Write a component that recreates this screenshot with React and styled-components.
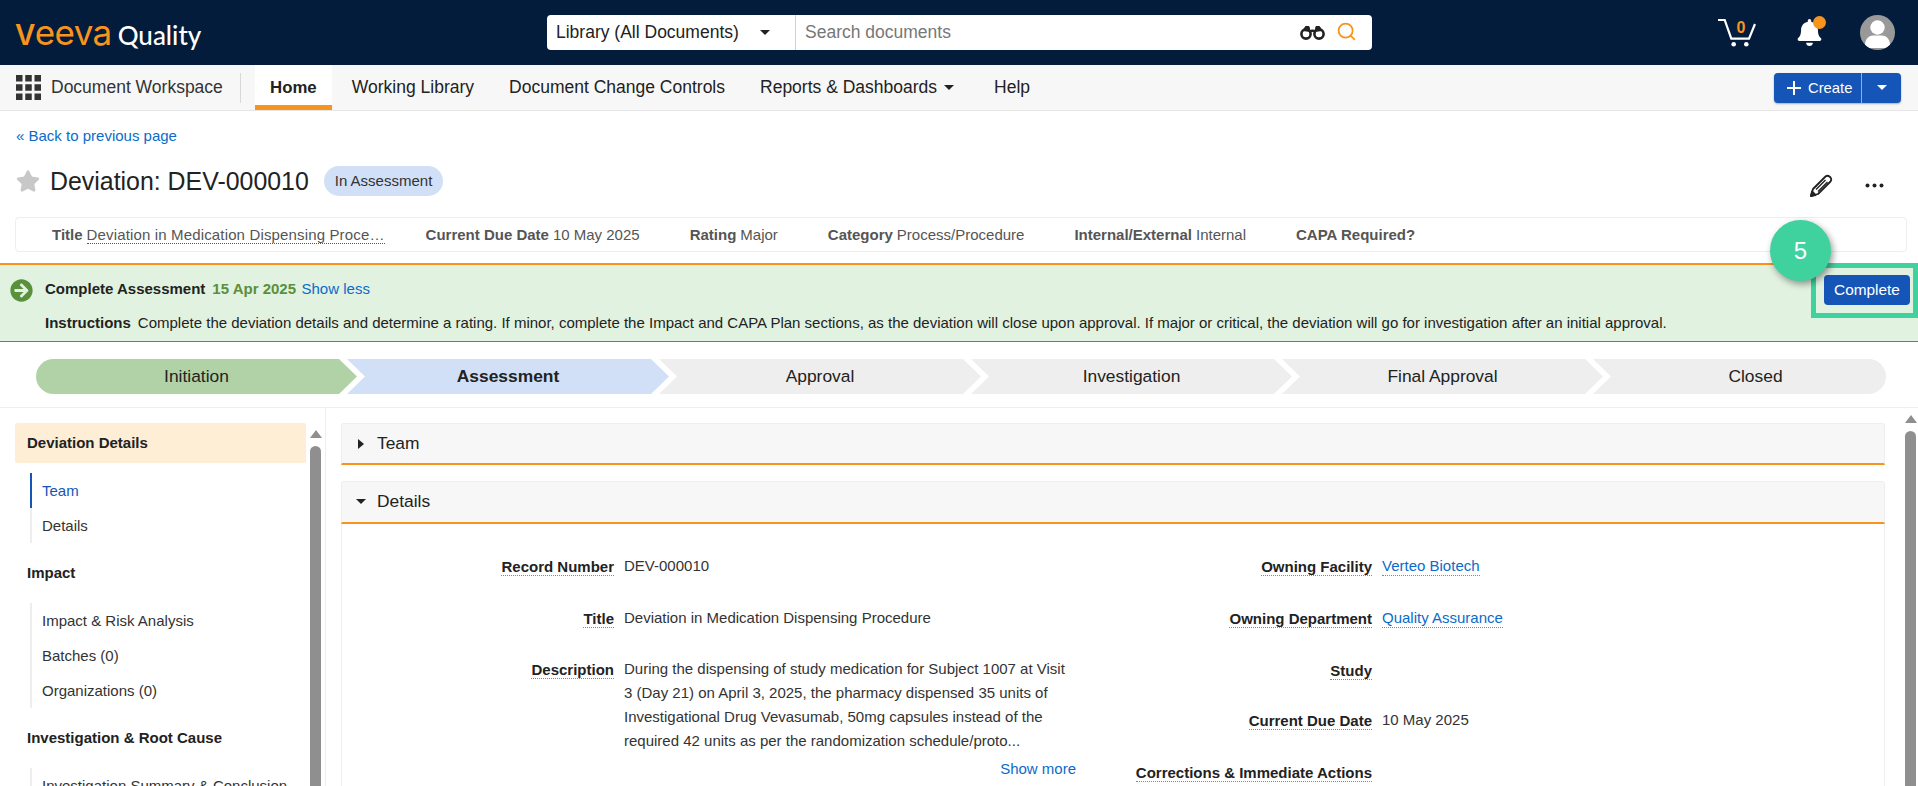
import React from 'react';
import styled, { createGlobalStyle } from 'styled-components';
import { Search } from 'lucide-react';
import { FaBell, FaStar, FaArrowCircleRight } from 'react-icons/fa';

const GlobalStyle = createGlobalStyle`
  * { box-sizing: border-box; }
  html, body { margin: 0; padding: 0; background: #fff; }
  body {
    font-family: "Liberation Sans", Arial, sans-serif;
    font-size: 15px;
    color: #222;
  }
`;

const Page = styled.div`
  height: 786px;
  display: flex;
  flex-direction: column;
  overflow: hidden;
`;

const TopBar = styled.header`
  height: 65px;
  flex: none;
  display: flex;
  align-items: center;
  padding: 0 23px 0 15px;
  background: #041c3c;
`;

const Logo = styled.div`
  width: 532px;
  display: flex;
  align-items: baseline;
  gap: 6px;
  padding-top: 1px;
`;

const Wordmark = styled.span`
  color: #f7941e;
  font-family: Inter, sans-serif;
  font-size: 35px;
  line-height: 40px;
  font-weight: 400;
  letter-spacing: -0.6px;
`;

const WordmarkCap = styled.span`
  font-size: 28px;
  font-weight: 600;
`;

const Product = styled.span`
  color: #fff;
  font-family: Lato, sans-serif;
  font-size: 26px;
  font-weight: 500;
`;

const SearchBar = styled.div`
  width: 825px;
  height: 35px;
  display: flex;
  align-items: center;
  background: #fff;
  border-radius: 4px;
`;

const ScopeSelect = styled.div`
  width: 249px;
  height: 100%;
  display: flex;
  align-items: center;
  padding-left: 9px;
  font-size: 17.5px;
  color: #222;
  border-right: 1px solid #ccd3dc;
`;

const Caret = styled.span`
  display: inline-block;
  flex: none;
  width: 0;
  height: 0;
  margin-left: ${({ $gap }) => $gap || 0}px;
  border-left: ${({ $size }) => $size || 5}px solid transparent;
  border-right: ${({ $size }) => $size || 5}px solid transparent;
  border-top: ${({ $size }) => $size || 5}px solid ${({ $color }) => $color || '#222'};
`;

const CaretRight = styled.span`
  display: inline-block;
  width: 0;
  height: 0;
  border-top: 5px solid transparent;
  border-bottom: 5px solid transparent;
  border-left: 6px solid #222;
`;

const SearchInput = styled.div`
  flex: 1;
  display: flex;
  align-items: center;
  padding: 0 15px 0 9px;
  font-size: 17.5px;
  color: #777;
`;

const SearchIcons = styled.div`
  margin-left: auto;
  display: flex;
  align-items: center;
  gap: 11px;
  color: #f7941e;
`;

const SearchGlass = styled(Search)`
  margin-top: -3px;
`;

const HeaderIcons = styled.div`
  margin-left: auto;
  display: flex;
  align-items: center;
`;

const CartWrap = styled.div`
  position: relative;
  width: 38px;
  height: 28px;
  margin-right: 40px;
`;

const CartCount = styled.span`
  position: absolute;
  left: 18px;
  top: 1px;
  width: 10px;
  text-align: center;
  font-size: 16px;
  line-height: 16px;
  font-weight: 700;
  color: #f7941e;
`;

const BellWrap = styled.div`
  position: relative;
  width: 24px;
  height: 27px;
  margin-right: 40px;
  color: #fff;
`;

const BellDot = styled.span`
  position: absolute;
  right: -6px;
  top: -3px;
  width: 13px;
  height: 13px;
  border-radius: 50%;
  background: #f7941e;
`;

const Avatar = styled.div`
  width: 35px;
  height: 35px;
  border-radius: 50%;
  overflow: hidden;
  background: #999;
`;

const NavBar = styled.nav`
  height: 46px;
  flex: none;
  display: flex;
  align-items: stretch;
  padding: 0 17px 0 16px;
  background: #f7f7f7;
  border-bottom: 1px solid #e6e6e6;
  font-size: 17.5px;
`;

const Workspace = styled.div`
  display: flex;
  align-items: center;
  gap: 10px;
  color: #333;
`;

const NavDivider = styled.span`
  width: 1px;
  height: 30px;
  align-self: center;
  margin: 0 14px 0 17px;
  background: #d8d8d8;
`;

const NavItem = styled.a`
  display: flex;
  align-items: center;
  padding: 0 17.5px;
  color: #222;
`;

const HomeTab = styled(NavItem)`
  width: 77px;
  justify-content: center;
  padding: 5px 0 0;
  margin-right: 2.5px;
  background: #fff;
  font-size: 16.8px;
  font-weight: 700;
  border-bottom: 5px solid #f7941e;
`;

const MenuNavItem = styled(NavItem)`
  margin-right: 5px;
`;

const CreateGroup = styled.div`
  margin-left: auto;
  align-self: center;
  display: flex;
  height: 30px;
  width: 127px;
  color: #fff;
  background: #1655b8;
  border-radius: 4px;
  box-shadow: 0 1px 2px rgba(0, 0, 0, 0.3);
`;

const CreateMain = styled.div`
  width: 88px;
  display: flex;
  align-items: center;
  gap: 7px;
  padding-left: 13px;
  font-size: 14.8px;
  border-right: 1px solid #8eaee0;
`;

const CreateToggle = styled.div`
  flex: 1;
  display: flex;
  align-items: center;
  justify-content: center;
`;

const BackRow = styled.div`
  height: 49px;
  flex: none;
  display: flex;
  align-items: center;
  padding-left: 16px;
`;

const TextLink = styled.a`
  color: #0b6bcb;
`;

const TitleRow = styled.div`
  height: 41px;
  flex: none;
  display: flex;
  align-items: center;
  padding: 0 34px 0 16px;
  margin-bottom: 16px;
  color: #c8c8c8;
`;

const PageTitle = styled.h1`
  margin: 0 15px 0 10px;
  font-size: 24.9px;
  line-height: 30px;
  font-weight: 400;
  color: #222;
`;

const Pill = styled.span`
  height: 30px;
  padding: 0 11px 1px;
  display: flex;
  align-items: center;
  border-radius: 15px;
  background: #d1e0f7;
  color: #333;
`;

const TitleActions = styled.div`
  margin-left: auto;
  margin-top: 9px;
  display: flex;
  align-items: center;
  gap: 32px;
`;

const Summary = styled.div`
  height: 35px;
  flex: none;
  margin: 0 11px 11px 15px;
  padding-left: 36px;
  display: flex;
  align-items: center;
  gap: 50px;
  border: 1px solid #eee;
  border-radius: 4px;
  color: #555;
`;

const SummaryItem = styled.div`
  display: flex;
  gap: 4px;
  margin-right: ${({ $pull }) => ($pull ? -9 : 0)}px;
  white-space: nowrap;
`;

const SummaryValue = styled.span`
  border-bottom: ${({ $dotted }) => ($dotted ? '1px dotted #555' : 'none')};
  letter-spacing: ${({ $dotted }) => ($dotted ? '0.15px' : '0')};
`;

const Banner = styled.section`
  position: relative;
  height: 79px;
  flex: none;
  display: flex;
  padding: 13px 8px 8px 10px;
  background: #e1f2e0;
  border-top: 2px solid #f7941e;
  border-bottom: 1px solid #5a8f3c;
`;

const BannerBody = styled.div`
  flex: 1;
  display: flex;
  flex-direction: column;
  gap: 14px;
`;

const BannerRow = styled.div`
  height: 20px;
  display: flex;
  align-items: center;
  gap: ${({ $gap }) => $gap}px;
  padding-left: ${({ $indent }) => $indent || 0}px;
  color: #222;
  white-space: nowrap;
`;

const BannerIcon = styled.span`
  display: flex;
  width: 23px;
  margin: 5px 5px 0 0;
  color: #5a8f3c;
`;

const BannerDate = styled.b`
  margin-right: -1.5px;
  color: #5a8f3c;
`;

const CompleteButton = styled.button`
  width: 86px;
  height: 30px;
  margin-top: -3px;
  border: 0;
  border-radius: 4px;
  background: #1655b8;
  color: #fff;
  font-family: inherit;
  font-size: 15.4px;
  padding: 0;
`;

const CalloutFrame = styled.div`
  position: absolute;
  top: -2px;
  right: 0;
  width: 107px;
  height: 55px;
  border: 5px solid #3fd19e;
  pointer-events: none;
`;

const CalloutBadge = styled.div`
  position: absolute;
  top: -45px;
  right: 87px;
  width: 61px;
  height: 61px;
  display: flex;
  align-items: center;
  justify-content: center;
  border-radius: 50%;
  background: #3fd19e;
  color: #fff;
  font-size: 24px;
  box-shadow: 2px 3px 7px rgba(0, 0, 0, 0.4);
`;

const Stepper = styled.div`
  flex: none;
  display: flex;
  padding: 17px 0 13px 36px;
  font-size: 17.4px;
`;

const Step = styled.div`
  height: 35px;
  flex: none;
  width: ${({ $width }) => $width}px;
  margin-left: ${({ $first }) => ($first ? 0 : -10)}px;
  padding-left: ${({ $pad }) => $pad || 0}px;
  display: flex;
  align-items: center;
  justify-content: center;
  background: ${({ $bg }) => $bg};
  font-weight: ${({ $active }) => ($active ? 700 : 400)};
  border-radius: ${({ $first, $last }) => ($first ? '18px 0 0 18px' : $last ? '0 18px 18px 0' : '0')};
  clip-path: ${({ $first, $last }) =>
    $first
      ? 'polygon(0 0, calc(100% - 18px) 0, 100% 50%, calc(100% - 18px) 100%, 0 100%)'
      : $last
        ? 'polygon(0 0, 100% 0, 100% 100%, 0 100%, 18px 50%)'
        : 'polygon(0 0, calc(100% - 18px) 0, 100% 50%, calc(100% - 18px) 100%, 0 100%, 18px 50%)'};
`;

const Body = styled.div`
  flex: 1;
  min-height: 0;
  display: flex;
  overflow: hidden;
  border-top: 1px solid #eee;
`;

const Sidebar = styled.aside`
  width: 326px;
  flex: none;
  display: flex;
  gap: 4px;
  padding: 0 4px 0 15px;
  border-right: 1px solid #eee;
`;

const SideList = styled.div`
  flex: 1;
  padding-top: 15px;
  display: flex;
  flex-direction: column;
  gap: 10px;
`;

const SideHeading = styled.div`
  height: 40px;
  flex: none;
  display: flex;
  align-items: center;
  padding: 0 0 1px 12px;
  font-weight: 700;
  color: #222;
  border-radius: 2px;
  background: ${({ $active }) => ($active ? '#feeed6' : 'transparent')};
`;

const SideGroup = styled.div`
  flex: none;
  margin-left: 15px;
`;

const SideLink = styled.a`
  height: 35px;
  display: flex;
  align-items: center;
  padding-left: 10px;
  border-left: 2px solid ${({ $active }) => ($active ? '#1655b8' : '#eee')};
  color: ${({ $active }) => ($active ? '#1655b8' : '#333')};
`;

const Rail = styled.div`
  width: 11px;
  flex: none;
  display: flex;
  flex-direction: column;
  align-items: center;
  padding-top: ${({ $top }) => $top}px;
  margin-right: ${({ $right }) => $right || 0}px;
`;

const RailArrow = styled.span`
  width: 0;
  height: 0;
  border-left: 6px solid transparent;
  border-right: 6px solid transparent;
  border-bottom: 8px solid #8f8f8f;
`;

const RailThumb = styled.span`
  flex: 1;
  width: 100%;
  margin-top: 8px;
  border-radius: 6px 6px 0 0;
  background: #8f8f8f;
`;

const Main = styled.main`
  flex: 1;
  min-width: 0;
  display: flex;
  padding-left: 15px;
`;

const MainColumn = styled.div`
  width: 1544px;
  flex: none;
  margin-right: 20px;
  padding-top: 15px;
`;

const PanelHeader = styled.div`
  height: ${({ $height }) => $height}px;
  margin-bottom: ${({ $below }) => $below || 0}px;
  display: flex;
  align-items: center;
  gap: 11px;
  padding: 0 0 ${({ $lift }) => $lift || 0}px 14px;
  font-size: 17.4px;
  color: #222;
  background: #f7f7f7;
  border: 1px solid #eee;
  border-bottom: 2px solid #f7941e;
  border-radius: 3px 3px 0 0;
`;

const CaretSlot = styled.span`
  width: 10px;
  display: flex;
  justify-content: center;
`;

const PanelBody = styled.div`
  display: flex;
  height: 400px;
  padding-top: 30px;
  border: 1px solid #eee;
  border-top: 0;
`;

const FieldColumn = styled.div`
  display: flex;
  flex-direction: column;
  gap: ${({ $gap }) => $gap}px;
  width: ${({ $width }) => $width}px;
`;

const Field = styled.div`
  display: grid;
  grid-template-columns: ${({ $label }) => $label}px 1fr;
  column-gap: 10px;
  line-height: 24px;
`;

const LabelCell = styled.div`
  display: flex;
  justify-content: flex-end;
  align-items: flex-start;
  padding-top: 4px;
`;

const Label = styled.span`
  font-weight: 700;
  line-height: 17px;
  color: #222;
  border-bottom: 1px dotted #888;
`;

const Value = styled.div`
  color: #333;
`;

const Description = styled.div`
  max-width: 455px;
`;

const FieldLink = styled.a`
  color: #0b6bcb;
  border-bottom: 1px dotted #888;
  padding-bottom: 1px;
`;

const ShowMore = styled(TextLink)`
  display: block;
  margin-top: 4px;
  text-align: right;
`;

const WaffleIcon = () => (
  <svg width="25" height="25" viewBox="0 0 25 25" fill="#333">
    {[0, 9.25, 18.5].map((y) =>
      [0, 9.25, 18.5].map((x) => <rect key={`${x}-${y}`} x={x} y={y} width="6.5" height="6.5" />)
    )}
  </svg>
);

const BinocularsIcon = () => (
  <svg width="25" height="15" viewBox="0 0 25 15" fill="none" stroke="#222" strokeWidth="2.6">
    <circle cx="6" cy="9" r="4.6" />
    <circle cx="19" cy="9" r="4.6" />
    <path d="M9 6.5 Q12.5 5 16 6.5" />
    <path d="M3 6 L5.5 1.5 H9 L10 7 M22 6 L19.5 1.5 H16 L15 7" fill="#222" strokeWidth="1" />
  </svg>
);

const CartIcon = () => (
  <svg width="38" height="28" viewBox="0 0 38 28" fill="none" stroke="#fff" strokeWidth="2.2">
    <path d="M0 1 H6.7 L13.3 19.7 H31 L37 5" />
    <circle cx="15.7" cy="25.2" r="2.3" fill="#fff" stroke="none" />
    <circle cx="28.3" cy="25.2" r="2.3" fill="#fff" stroke="none" />
  </svg>
);

const PersonIcon = () => (
  <svg width="35" height="35" viewBox="0 0 35 35" fill="#fff">
    <circle cx="17.5" cy="12.5" r="7.2" />
    <path d="M5 30 C5 23.5 9.5 20.5 13 20.5 H22 C25.5 20.5 30 23.5 30 30 C30 32 27 33 25 33 H10 C8 33 5 32 5 30 Z" />
  </svg>
);

const PlusIcon = () => (
  <svg width="14" height="14" viewBox="0 0 14 14" stroke="#fff" strokeWidth="2">
    <path d="M7 0 V14 M0 7 H14" />
  </svg>
);

const PencilIcon = () => (
  <svg width="23" height="23" viewBox="0 0 23 23" fill="none" stroke="#222" strokeWidth="1.8" strokeLinejoin="round">
    <path d="M1 22 L3 15 L15.5 2.5 Q17.5 1 19.5 2.5 L20.5 3.5 Q22 5.5 20.5 7.5 L8 20 Z" />
    <path d="M6 15.5 L15.5 6 M8 17.5 L17.5 8" strokeWidth="1.4" />
    <path d="M1 22 L2 17.5 L5.5 21 Z" fill="#222" />
  </svg>
);

const MoreIcon = () => (
  <svg width="19" height="5" viewBox="0 0 19 5" fill="#222">
    <circle cx="2.5" cy="2.5" r="2" />
    <circle cx="9.5" cy="2.5" r="2" />
    <circle cx="16.5" cy="2.5" r="2" />
  </svg>
);

const steps = [
  { label: 'Initiation', bg: '#b1d2a7', width: 321, first: true },
  { label: 'Assessment', bg: '#d1e0f7', width: 322, active: true },
  { label: 'Approval', bg: '#eee', width: 322 },
  { label: 'Investigation', bg: '#eee', width: 321 },
  { label: 'Final Approval', bg: '#eee', width: 321 },
  { label: 'Closed', bg: '#eee', width: 293, last: true, pad: 32 },
];

const summary = [
  { label: 'Current Due Date', value: '10 May 2025' },
  { label: 'Rating', value: 'Major' },
  { label: 'Category', value: 'Process/Procedure' },
  { label: 'Internal/External', value: 'Internal' },
  { label: 'CAPA Required?', value: '' },
];

const sideSections = [
  { title: 'Deviation Details', active: true, links: ['Team', 'Details'] },
  { title: 'Impact', links: ['Impact & Risk Analysis', 'Batches (0)', 'Organizations (0)'] },
  { title: 'Investigation & Root Cause', links: ['Investigation Summary & Conclusion'] },
];

const App = () => (
  <Page>
    <GlobalStyle />
    <TopBar>
      <Logo>
        <Wordmark><WordmarkCap>V</WordmarkCap>eeva</Wordmark>
        <Product>Quality</Product>
      </Logo>
      <SearchBar>
        <ScopeSelect>
          Library (All Documents)
          <Caret $gap={21} />
        </ScopeSelect>
        <SearchInput>
          Search documents
          <SearchIcons>
            <BinocularsIcon />
            <SearchGlass size={21} strokeWidth={2} />
          </SearchIcons>
        </SearchInput>
      </SearchBar>
      <HeaderIcons>
        <CartWrap>
          <CartIcon />
          <CartCount>0</CartCount>
        </CartWrap>
        <BellWrap>
          <FaBell size={27} />
          <BellDot />
        </BellWrap>
        <Avatar><PersonIcon /></Avatar>
      </HeaderIcons>
    </TopBar>

    <NavBar>
      <Workspace>
        <WaffleIcon />
        Document Workspace
      </Workspace>
      <NavDivider />
      <HomeTab>Home</HomeTab>
      <NavItem>Working Library</NavItem>
      <NavItem>Document Change Controls</NavItem>
      <MenuNavItem>Reports &amp; Dashboards <Caret $gap={7} /></MenuNavItem>
      <NavItem>Help</NavItem>
      <CreateGroup>
        <CreateMain><PlusIcon />Create</CreateMain>
        <CreateToggle><Caret $color="#fff" /></CreateToggle>
      </CreateGroup>
    </NavBar>

    <BackRow>
      <TextLink>« Back to previous page</TextLink>
    </BackRow>

    <TitleRow>
      <FaStar size={24} />
      <PageTitle>Deviation: DEV-000010</PageTitle>
      <Pill>In Assessment</Pill>
      <TitleActions>
        <PencilIcon />
        <MoreIcon />
      </TitleActions>
    </TitleRow>

    <Summary>
      <SummaryItem $pull>
        <b>Title</b>
        <SummaryValue $dotted>Deviation in Medication Dispensing Proce…</SummaryValue>
      </SummaryItem>
      {summary.map((item) => (
        <SummaryItem key={item.label}>
          <b>{item.label}</b>
          {item.value && <SummaryValue>{item.value}</SummaryValue>}
        </SummaryItem>
      ))}
    </Summary>

    <Banner>
      <BannerBody>
        <BannerRow $gap={7}>
          <BannerIcon><FaArrowCircleRight size={23} /></BannerIcon>
          <b>Complete Assessment</b>
          <BannerDate>15 Apr 2025</BannerDate>
          <TextLink>Show less</TextLink>
        </BannerRow>
        <BannerRow $gap={7} $indent={35}>
          <b>Instructions</b>
          Complete the deviation details and determine a rating. If minor, complete the Impact and CAPA Plan sections, as the deviation will close upon approval. If major or critical, the deviation will go for investigation after an initial approval.
        </BannerRow>
      </BannerBody>
      <CompleteButton>Complete</CompleteButton>
      <CalloutFrame />
      <CalloutBadge>5</CalloutBadge>
    </Banner>

    <Stepper>
      {steps.map((step) => (
        <Step
          key={step.label}
          $bg={step.bg}
          $width={step.width}
          $first={step.first}
          $last={step.last}
          $active={step.active}
          $pad={step.pad}
        >
          {step.label}
        </Step>
      ))}
    </Stepper>

    <Body>
      <Sidebar>
        <SideList>
          {sideSections.map((section) => (
            <React.Fragment key={section.title}>
              <SideHeading $active={section.active}>{section.title}</SideHeading>
              <SideGroup>
                {section.links.map((link) => (
                  <SideLink key={link} $active={link === 'Team'}>{link}</SideLink>
                ))}
              </SideGroup>
            </React.Fragment>
          ))}
        </SideList>
        <Rail $top={22}>
          <RailArrow />
          <RailThumb />
        </Rail>
      </Sidebar>

      <Main>
        <MainColumn>
          <PanelHeader $height={42} $below={16}>
            <CaretSlot><CaretRight /></CaretSlot>
            Team
          </PanelHeader>
          <PanelHeader $height={43} $lift={2}>
            <CaretSlot><Caret /></CaretSlot>
            Details
          </PanelHeader>
          <PanelBody>
            <FieldColumn $width={734} $gap={27.5}>
              <Field $label={272}>
                <LabelCell><Label>Record Number</Label></LabelCell>
                <Value>DEV-000010</Value>
              </Field>
              <Field $label={272}>
                <LabelCell><Label>Title</Label></LabelCell>
                <Value>Deviation in Medication Dispensing Procedure</Value>
              </Field>
              <Field $label={272}>
                <LabelCell><Label>Description</Label></LabelCell>
                <Value>
                  <Description>
                    During the dispensing of study medication for Subject 1007 at Visit 3 (Day 21) on April 3, 2025, the pharmacy dispensed 35 units of Investigational Drug Vevasumab, 50mg capsules instead of the required 42 units as per the randomization schedule/proto...
                  </Description>
                  <ShowMore>Show more</ShowMore>
                </Value>
              </Field>
            </FieldColumn>
            <FieldColumn $width={700} $gap={28}>
              <Field $label={296}>
                <LabelCell><Label>Owning Facility</Label></LabelCell>
                <Value><FieldLink>Verteo Biotech</FieldLink></Value>
              </Field>
              <Field $label={296}>
                <LabelCell><Label>Owning Department</Label></LabelCell>
                <Value><FieldLink>Quality Assurance</FieldLink></Value>
              </Field>
              <Field $label={296}>
                <LabelCell><Label>Study</Label></LabelCell>
                <Value />
              </Field>
              <Field $label={296}>
                <LabelCell><Label>Current Due Date</Label></LabelCell>
                <Value>10 May 2025</Value>
              </Field>
              <Field $label={296}>
                <LabelCell><Label>Corrections &amp; Immediate Actions</Label></LabelCell>
                <Value />
              </Field>
            </FieldColumn>
          </PanelBody>
        </MainColumn>
        <Rail $top={7} $right={2}>
          <RailArrow />
          <RailThumb />
        </Rail>
      </Main>
    </Body>
  </Page>
);

export default App;
